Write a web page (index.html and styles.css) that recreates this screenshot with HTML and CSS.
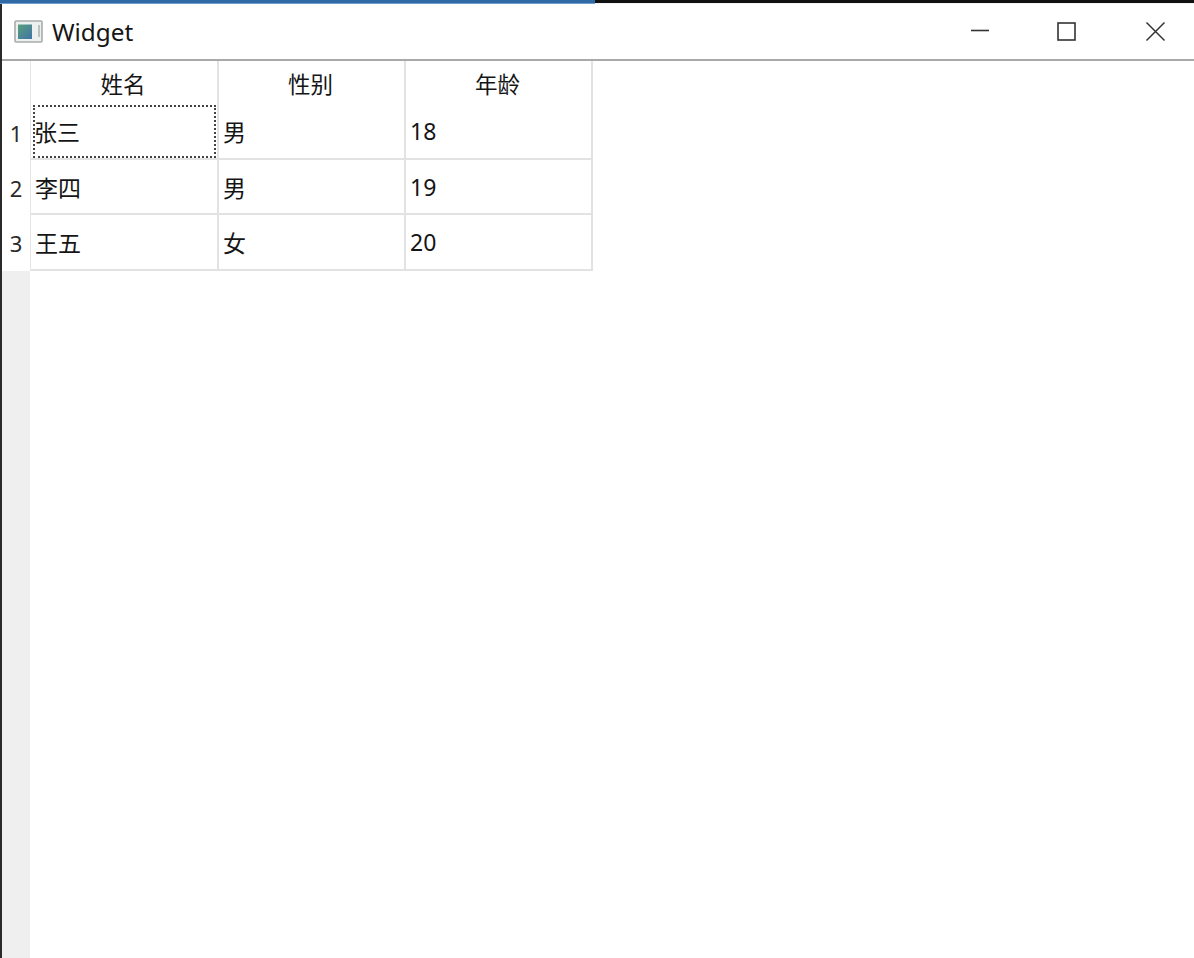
FILE: index.html
```html
<!DOCTYPE html>
<html lang="zh">
<head>
<meta charset="utf-8">
<title>Widget</title>
<link rel="stylesheet" href="styles.css">
</head>
<body>
<div class="window">
  <div class="topstrip"><div class="topstrip-blue"></div></div>
  <header class="titlebar">
    <svg class="appicon" width="30" height="24" viewBox="0 0 30 24">
      <defs>
        <linearGradient id="g" x1="0" y1="0" x2="1" y2="1">
          <stop offset="0" stop-color="#5a9f7c"/>
          <stop offset="1" stop-color="#3f74a8"/>
        </linearGradient>
      </defs>
      <rect x="1" y="1" width="27" height="21" rx="1" fill="#eef0f0" stroke="#a9acac" stroke-width="1.6"/>
      <rect x="4" y="4.500" width="14" height="14.500" fill="url(#g)"/>
      <rect x="24" y="5" width="2" height="12" fill="#b5c4be"/>
    </svg>
    <span class="title">Widget</span>
    <div class="controls">
      <svg class="ctl" width="88" height="30" viewBox="0 0 88 30"><path d="M35 13.500H53" stroke="#333" stroke-width="1.600"/></svg>
      <svg class="ctl" width="88" height="30" viewBox="0 0 88 30"><rect x="34" y="6" width="17" height="17" fill="none" stroke="#333" stroke-width="1.600"/></svg>
      <svg class="ctl" width="88" height="30" viewBox="0 0 88 30"><path d="M34.500 5.500L52.500 23.500M52.500 5.500L34.500 23.500" stroke="#333" stroke-width="1.500"/></svg>
    </div>
  </header>
  <main class="content">
    <div class="rowhead">
      <div class="corner"></div>
      <div class="rownum r1">1</div>
      <div class="rownum r2">2</div>
      <div class="rownum r3">3</div>
      <div class="rowfill"></div>
    </div>
    <div class="table">
      <div class="hcell">姓名</div>
      <div class="hcell">性别</div>
      <div class="hcell">年龄</div>
      <div class="cell r1 focus">张三</div>
      <div class="cell r1">男</div>
      <div class="cell r1">18</div>
      <div class="cell r2">李四</div>
      <div class="cell r2">男</div>
      <div class="cell r2">19</div>
      <div class="cell r3">王五</div>
      <div class="cell r3">女</div>
      <div class="cell r3">20</div>
    </div>
  </main>
</div>
</body>
</html>
```
FILE: styles.css
```css
* { box-sizing: border-box; }
html, body { margin: 0; height: 100%; overflow: hidden; background: #fff; }
body {
  font-family: "Noto Sans", "Noto Sans CJK SC", sans-serif;
  color: #1c1c1c;
}
.window {
  height: 958px;
  display: flex;
  flex-direction: column;
  border-left: 2px solid #2a2a2a;
}
.topstrip {
  height: 4px;
  background: linear-gradient(#111 75%, #f4f4f4 75%);
  margin-left: -2px;
  flex: none;
}
.topstrip-blue {
  width: 595px;
  height: 4px;
  background: linear-gradient(#2f6aa6, #2f6aa6 70%, #9cc4e8);
}
.titlebar {
  height: 57px;
  flex: none;
  display: flex;
  align-items: center;
  padding-left: 12px;
  border-bottom: 2px solid #a9a9a9;
  background: #fff;
}
.appicon { flex: none; }
.title {
  font-size: 24.300px;
  line-height: 30px;
  margin-left: 8px;
  color: #151515;
}
.controls {
  margin-left: auto;
  display: flex;
  margin-right: -6px;
}
.ctl { display: block; }
.content {
  flex: 1;
  display: flex;
  min-height: 0;
}
.rowhead {
  width: 28px;
  flex: none;
  display: flex;
  flex-direction: column;
}
.corner { height: 44px; flex: none; background: #fff; }
.rownum {
  display: flex;
  align-items: center;
  justify-content: center;
  font-size: 22px;
  color: #2a2a2a;
  background: #fff;
  flex: none;
}
.rownum.r1 { height: 55px; }
.rownum.r2 { height: 55px; }
.rownum.r3 { height: 56px; }
.rowfill { flex: 1; background: #efefef; }
.table {
  display: grid;
  grid-template-columns: 188px 187px 187px;
  grid-template-rows: 44px 55px 55px 56px;
  align-self: flex-start;
  border-left: 1px solid #e4e4e4;
  width: 563px;
}
.hcell {
  display: flex;
  align-items: center;
  justify-content: center;
  font-size: 22.500px;
  padding-right: 2px;
  border-right: 2px solid #e2e2e2;
  color: #151515;
}
.cell {
  display: flex;
  align-items: center;
  font-size: 23px;
  padding-left: 4px;
  border-right: 2px solid #e2e2e2;
  border-bottom: 2px solid #e2e2e2;
  color: #151515;
}
.cell.r1 { padding-bottom: 2px; }
.cell.focus {
  position: relative;
  padding-left: 3px;
}
.cell.focus::after {
  content: "";
  position: absolute;
  left: 2px;
  right: 1px;
  top: 0;
  bottom: 0;
  border: 2px dotted #444;
}
```
